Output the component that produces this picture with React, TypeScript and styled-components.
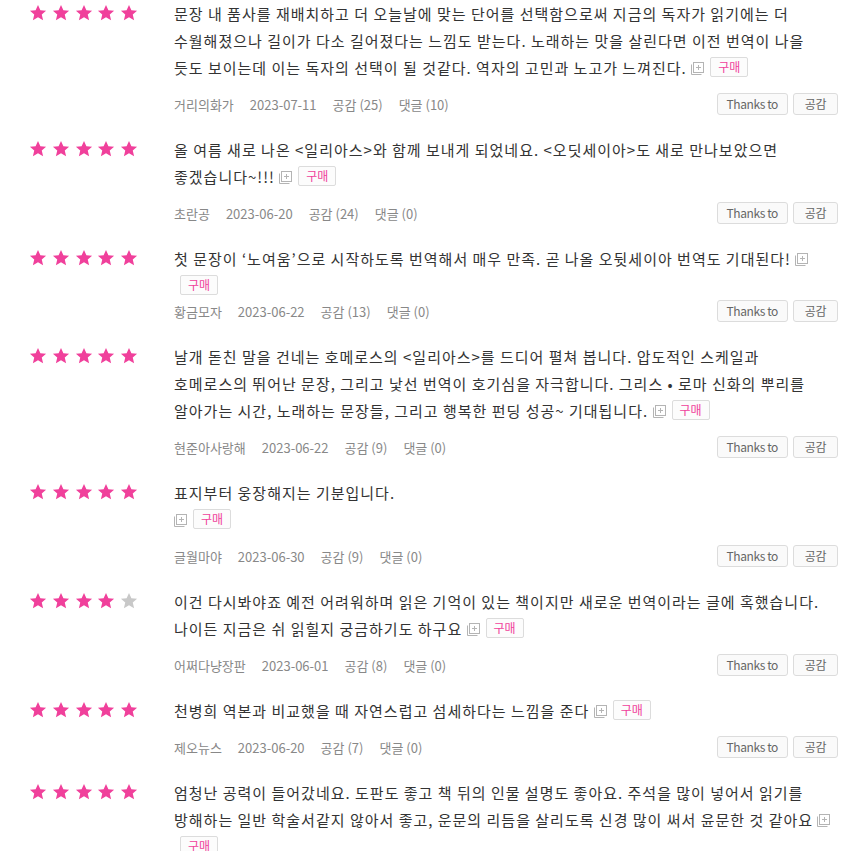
import React from "react";
import styled, { createGlobalStyle } from "styled-components";

interface Review {
  rating: number;
  text: string;
  user: string;
  date: string;
  likes: number;
  comments: number;
}

const reviews: Review[] = [
  {
    rating: 5,
    text:
      "문장 내 품사를 재배치하고 더 오늘날에 맞는 단어를 선택함으로써 지금의 독자가 읽기에는 더 수월해졌으나 길이가 다소 길어졌다는 느낌도 받는다. 노래하는 맛을 살린다면 이전 번역이 나을 듯도 보이는데 이는 독자의 선택이 될 것같다. 역자의 고민과 노고가 느껴진다.",
    user: "거리의화가",
    date: "2023-07-11",
    likes: 25,
    comments: 10
  },
  {
    rating: 5,
    text:
      "올 여름 새로 나온 <일리아스>와 함께 보내게 되었네요. <오딧세이아>도 새로 만나보았으면 좋겠습니다~!!!",
    user: "초란공",
    date: "2023-06-20",
    likes: 24,
    comments: 0
  },
  {
    rating: 5,
    text:
      "첫 문장이 ‘노여움’으로 시작하도록 번역해서 매우 만족. 곧 나올 오뒷세이아 번역도 기대된다!",
    user: "황금모자",
    date: "2023-06-22",
    likes: 13,
    comments: 0
  },
  {
    rating: 5,
    text:
      "날개 돋친 말을 건네는 호메로스의 <일리아스>를 드디어 펼쳐 봅니다. 압도적인 스케일과 호메로스의 뛰어난 문장, 그리고 낯선 번역이 호기심을 자극합니다. 그리스 • 로마 신화의 뿌리를 알아가는 시간, 노래하는 문장들, 그리고 행복한 펀딩 성공~ 기대됩니다.",
    user: "현준아사랑해",
    date: "2023-06-22",
    likes: 9,
    comments: 0
  },
  {
    rating: 5,
    text: "표지부터 웅장해지는 기분입니다.\n",
    user: "글월마야",
    date: "2023-06-30",
    likes: 9,
    comments: 0
  },
  {
    rating: 4,
    text:
      "이건 다시봐야죠 예전 어려워하며 읽은 기억이 있는 책이지만 새로운 번역이라는 글에 혹했습니다. 나이든 지금은 쉬 읽힐지 궁금하기도 하구요",
    user: "어쩌다냥장판",
    date: "2023-06-01",
    likes: 8,
    comments: 0
  },
  {
    rating: 5,
    text: "천병희 역본과 비교했을 때 자연스럽고 섬세하다는 느낌을 준다",
    user: "제오뉴스",
    date: "2023-06-20",
    likes: 7,
    comments: 0
  },
  {
    rating: 5,
    text:
      "엄청난 공력이 들어갔네요. 도판도 좋고 책 뒤의 인물 설명도 좋아요. 주석을 많이 넣어서 읽기를 방해하는 일반 학술서같지 않아서 좋고, 운문의 리듬을 살리도록 신경 많이 써서 윤문한 것 같아요",
    user: "스테파노",
    date: "2023-06-19",
    likes: 6,
    comments: 0
  }
];

function Star({ on }: { on: boolean }) {
  return (
    <StarSvg viewBox="0 0 24 24" $on={on}>
      <path d="M12 1.2l3.2 7.1 7.6.7-5.8 5.1 1.8 7.6L12 17.7l-6.8 4 1.8-7.6L1.2 9l7.6-.7z" />
    </StarSvg>
  );
}

function ExpandIcon() {
  return (
    <IconSvg viewBox="0 0 13 13">
      <path d="M0.5 2.5v10h10" />
      <rect x="2.5" y="0.5" width="10" height="10" />
      <path d="M7.5 3v5M5 5.5h5" />
    </IconSvg>
  );
}

export default function App() {
  return (
    <Page>
      <GlobalStyle />
      {reviews.map((r, i) => (
        <ReviewRow key={i}>
          <Stars>
            {[0, 1, 2, 3, 4].map((n) => (
              <Star key={n} on={n < r.rating} />
            ))}
          </Stars>
          <Content>
            <Body>
              <Text>
                {r.text} <ExpandIcon />
              </Text>
              <Badge>구매</Badge>
            </Body>
            <Meta>
              <Info>
                <span>{r.user}</span>
                <span>{r.date}</span>
                <span>공감 ({r.likes})</span>
                <span>댓글 ({r.comments})</span>
              </Info>
              <Actions>
                <Button>Thanks to</Button>
                <Button>공감</Button>
              </Actions>
            </Meta>
          </Content>
        </ReviewRow>
      ))}
    </Page>
  );
}

const GlobalStyle = createGlobalStyle`
  html, body {
    margin: 0;
    padding: 0;
    background: #fff;
    overflow: hidden;
  }
  body {
    font-family: "Noto Sans CJK KR", "Noto Sans", sans-serif;
  }
`;

const Page = styled.div`
  width: 854px;
  height: 851px;
  overflow: hidden;
`;

const ReviewRow = styled.div`
  display: flex;
  padding: 0 16px 21px 29px;
`;

const Stars = styled.div`
  display: flex;
  gap: 4.75px;
  width: 145px;
  flex-shrink: 0;
  padding-top: 4px;
  align-self: flex-start;
`;

const StarSvg = styled.svg<{ $on: boolean }>`
  width: 18px;
  height: 18px;
  fill: ${(p) => (p.$on ? "#f0409b" : "#c8c8c8")};
`;

const Content = styled.div`
  flex: 1;
  min-width: 0;
`;

const Body = styled.div`
  padding-right: 4px;
  font-size: 15px;
  line-height: 0;
  color: #333;
  word-break: keep-all;
`;

const Text = styled.span`
  line-height: 27px;
  letter-spacing: 1px;
  white-space: pre-line;
`;

const IconSvg = styled.svg`
  width: 13px;
  height: 13px;
  vertical-align: -1px;
  fill: none;
  stroke: #b4b4b4;
  stroke-width: 1;
`;

const Badge = styled.span`
  display: inline-block;
  box-sizing: border-box;
  height: 20px;
  padding: 0 7px;
  margin: 3px 0 -7px 6px;
  border: 1px solid #dcdcdc;
  border-radius: 2px;
  background: #fcfcfc;
  color: #f0409b;
  font-size: 12px;
  line-height: 18px;
  vertical-align: top;
`;

const Meta = styled.div`
  display: flex;
  justify-content: space-between;
  align-items: center;
  margin-top: 12px;
`;

const Info = styled.div`
  display: flex;
  gap: 16px;
  font-size: 13px;
  color: #888;
`;

const Actions = styled.div`
  display: flex;
  gap: 5px;
`;

const Button = styled.button`
  box-sizing: border-box;
  height: 22px;
  min-width: 45px;
  padding: 0 9px;
  border: 1px solid #dcdcdc;
  border-radius: 3px;
  background: #fafafa;
  color: #666;
  font-family: inherit;
  font-size: 12px;
  letter-spacing: -0.4px;
  line-height: 20px;
  cursor: pointer;
`;
